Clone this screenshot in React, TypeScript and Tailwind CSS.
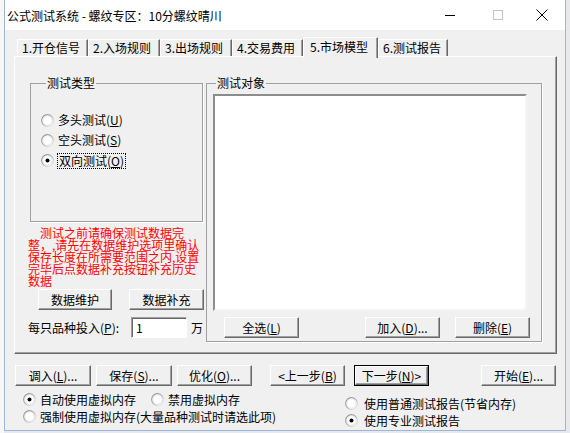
import React from 'react';

const FONT = { fontFamily: '"Noto Sans CJK SC", "Noto Sans", sans-serif' };

const Btn: React.FC<{ w: string; def?: boolean; children: React.ReactNode }> = ({ w, def, children }) => (
  <div className={`${w} h-[21px] shrink-0 ${def ? 'border border-black' : ''}`}>
    <div className="w-full h-full flex items-center justify-center border border-t-white border-l-white border-r-[#696969] border-b-[#696969] shadow-[inset_-1px_-1px_0_#a0a0a0] bg-[#f0f0f0] text-[12px] leading-[12px] text-black">
      {children}
    </div>
  </div>
);

const Radio: React.FC<{ on?: boolean }> = ({ on }) => (
  <svg width="13" height="13" viewBox="0 0 13 13" className="shrink-0">
    <defs>
      <linearGradient id="rg" x1="0" y1="0" x2="1" y2="1">
        <stop offset="0" stopColor="#8a8a8a" />
        <stop offset="0.5" stopColor="#b0b0b0" />
        <stop offset="1" stopColor="#f4f4f4" />
      </linearGradient>
    </defs>
    <circle cx="6.5" cy="6.5" r="5.8" fill="white" stroke="url(#rg)" strokeWidth="1.2" />
    <circle cx="6.5" cy="6.5" r="4.6" fill="none" stroke="#e4e4e4" strokeWidth="0.8" />
    {on && <circle cx="6.5" cy="6.5" r="2" fill="#000" />}
  </svg>
);

const Tab: React.FC<{ w: string; sel?: boolean; children: React.ReactNode }> = ({ w, sel, children }) =>
  sel ? (
    <div className={`${w} h-[21px] -mb-[2px] relative z-10 bg-[#f0f0f0] border-t border-l border-white border-r border-r-[#696969] shadow-[inset_-1px_0_0_#a0a0a0] flex items-start pt-[3px] pl-[6px] text-[12px] leading-[12px]`}>
      {children}
    </div>
  ) : (
    <div className={`${w} h-[17px] bg-[#f0f0f0] border-t border-l border-white border-r border-r-[#696969] shadow-[inset_-1px_0_0_#a0a0a0] flex items-center pl-[4px] text-[12px] leading-[12px]`}>
      {children}
    </div>
  );

const RED_LINES = [
  '\u3000测试之前请确保测试数据完',
  '整，,请先在数据维护选项里确认',
  '保存长度在所需要范围之内,设置',
  '完毕后点数据补充按钮补充历史',
  '数据',
];

export default function App() {
  return (
    <div className="w-[570px] h-[433px] bg-[#e6eaef] flex overflow-hidden text-black" style={FONT}>
      <div className="w-[4px] h-full bg-[#f7f7f7]" />
      <div className="w-[562px] h-[431px] border border-t-0 border-[#9db6d8] bg-[#f0f0f0] flex flex-col">
        {/* 标题栏 */}
        <div className="h-[30px] bg-white flex items-center shrink-0">
          <div className="pl-[2px] text-[12px] leading-[14px] pt-[1px]">公式测试系统 - 螺纹专区：10分螺纹晴川</div>
          <div className="ml-auto flex items-center h-full">
            <div className="w-[46px] h-full flex items-center justify-center">
              <div className="w-[10px] h-px bg-black" />
            </div>
            <div className="w-[46px] h-full flex items-center justify-center pl-[3px]">
              <div className="w-[10px] h-[10px] border border-[#c4c4c4]" />
            </div>
            <div className="w-[46px] h-full flex items-center justify-center">
              <svg width="12" height="12" viewBox="0 0 12 12">
                <path d="M0.5 0.5 L11.5 11.5 M11.5 0.5 L0.5 11.5" stroke="#000" strokeWidth="1" />
              </svg>
            </div>
          </div>
        </div>

        {/* 选项卡 */}
        <div className="flex items-end h-[19px] mt-[7px] pl-[12px]">
          <Tab w="w-[71px]">1.开仓信号</Tab>
          <Tab w="w-[72px]">2.入场规则</Tab>
          <Tab w="w-[72px]">3.出场规则</Tab>
          <Tab w="w-[71px]">4.交易费用</Tab>
          <Tab w="w-[75px]" sel>5.市场模型</Tab>
          <Tab w="w-[70px]">6.测试报告</Tab>
        </div>

        {/* 面板 */}
        <div className="ml-[9px] w-[543px] h-[298px] border border-t-white border-l-white border-r-[#696969] border-b-[#696969] shadow-[inset_-1px_-1px_0_#a0a0a0] flex">
          {/* 左列 */}
          <div className="w-[190px] pl-[13px] pt-[20px] flex flex-col">
            <fieldset className="ml-[2px] w-[173px] h-[145px] border border-[#a0a0a0] shadow-[1px_1px_0_white] pl-[10px] pt-[21px]">
              <legend className="ml-[5px] px-[1px] text-[12px] leading-[12px]">测试类型</legend>
              <div className="h-[20px] flex items-center gap-[4px] text-[12px] leading-[12px]">
                <Radio />
                <span>多头测试(<u>U</u>)</span>
              </div>
              <div className="h-[20px] flex items-center gap-[4px] text-[12px] leading-[12px]">
                <Radio />
                <span>空头测试(<u>S</u>)</span>
              </div>
              <div className="h-[21px] flex items-center gap-[3px] text-[12px] leading-[12px]">
                <Radio on />
                <span className="border border-dotted border-black px-[1px] py-[1px]">双向测试(<u>O</u>)</span>
              </div>
            </fieldset>
            <div className="mt-[5px] text-[12px] leading-[12px] text-[#ff0000] whitespace-pre">
              {RED_LINES.map((l, i) => (
                <div key={i}>{l}</div>
              ))}
            </div>
            <div className="flex mt-[2px] pl-[10px] gap-[17px]">
              <Btn w="w-[74px]">数据维护</Btn>
              <Btn w="w-[75px]">数据补充</Btn>
            </div>
            <div className="flex items-center mt-[7px] h-[21px] text-[12px] leading-[12px]">
              <span className="w-[103px]">每只品种投入(<u>P</u>):</span>
              <div className="w-[56px] h-[21px] bg-white border border-t-[#a0a0a0] border-l-[#a0a0a0] border-r-white border-b-white shadow-[inset_1px_1px_0_#696969] flex items-center pl-[4px]">
                1
              </div>
              <span className="ml-[4px]">万</span>
            </div>
          </div>

          {/* 右列 */}
          <fieldset className="mt-[20px] ml-[1px] w-[336px] h-[265px] border border-[#a0a0a0] shadow-[1px_1px_0_white] pl-[6px] pt-[5px]">
            <legend className="ml-[3px] px-[1px] text-[12px] leading-[12px]">测试对象</legend>
            <div className="w-[314px] h-[217px] bg-white border-2 border-t-[#8c8c8c] border-l-[#8c8c8c] border-r-[#f4f4f4] border-b-[#f4f4f4]" />
            <div className="flex mt-[6px] pl-[11px]">
              <Btn w="w-[75px]">全选(<u>L</u>)</Btn>
              <Btn w="w-[75px] ml-[66px]">加入(<u>D</u>)...</Btn>
              <Btn w="w-[75px] ml-[15px]">删除(<u>E</u>)</Btn>
            </div>
          </fieldset>
        </div>

        {/* 底部按钮 */}
        <div className="flex mt-[11px] pl-[10px]">
          <Btn w="w-[76px]">调入(<u>L</u>)...</Btn>
          <Btn w="w-[76px] ml-[5px]">保存(<u>S</u>)...</Btn>
          <Btn w="w-[75px] ml-[5px]">优化(<u>O</u>)...</Btn>
          <Btn w="w-[75px] ml-[18px]">&lt;上一步(<u>B</u>)</Btn>
          <Btn w="w-[75px] ml-[9px]" def>下一步(<u>N</u>)&gt;</Btn>
          <Btn w="w-[75px] ml-[52px]">开始(<u>E</u>)...</Btn>
        </div>

        {/* 底部单选 */}
        <div className="flex mt-[5px] text-[12px] leading-[12px]">
          <div className="pl-[18px] flex flex-col">
            <div className="h-[17px] flex items-center">
              <Radio on />
              <span className="ml-[4px]">自动使用虚拟内存</span>
              <span className="ml-[15px]"><Radio /></span>
              <span className="ml-[4px]">禁用虚拟内存</span>
            </div>
            <div className="h-[17px] flex items-center">
              <Radio />
              <span className="ml-[4px]">强制使用虚拟内存(大量品种测试时请选此项)</span>
            </div>
          </div>
          <div className="ml-auto mr-[49px] mt-[4px] flex flex-col">
            <div className="h-[17px] flex items-center">
              <Radio />
              <span className="ml-[6px]">使用普通测试报告(节省内存)</span>
            </div>
            <div className="h-[17px] flex items-center">
              <Radio on />
              <span className="ml-[6px]">使用专业测试报告</span>
            </div>
          </div>
        </div>
      </div>
    </div>
  );
}
